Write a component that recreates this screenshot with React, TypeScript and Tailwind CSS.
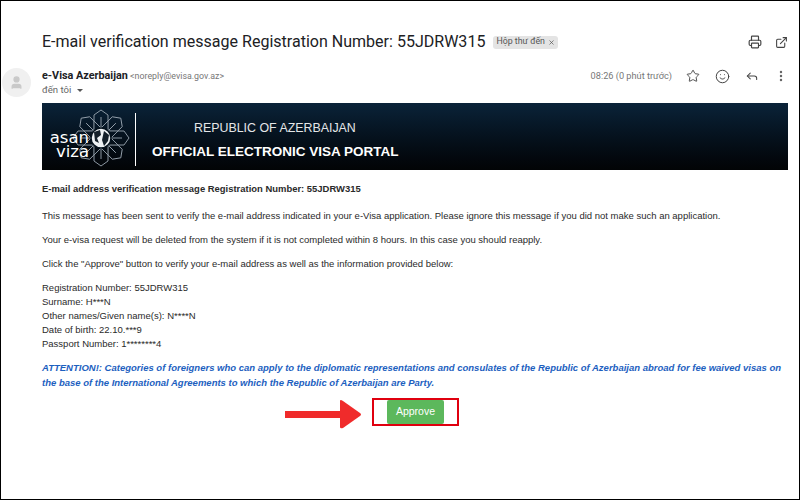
import React from 'react';
import { Printer, ExternalLink, Star, Smile, Reply, MoreVertical, User, X } from 'lucide-react';

const details = [
  'Registration Number: 55JDRW315',
  'Surname: H***N',
  'Other names/Given name(s): N****N',
  'Date of birth: 22.10.***9',
  'Passport Number: 1********4',
];

const petals = [0, 45, 90, 135, 180, 225, 270, 315];

const Logo = () => (
  <div className="relative h-[67px] w-[93px] shrink-0">
    <svg viewBox="0 0 93 67" className="absolute inset-0 h-full w-full" fill="none" stroke="#9aa6b1" strokeWidth="0.9">
      {petals.map((deg) => (
        <path key={deg} d="M59 25 L52 18 L52 12 L59 7 L66 12 L66 18 Z M59 25 L59 14" transform={`rotate(${deg} 59 35)`} />
      ))}
      <circle cx="59" cy="35" r="10" fill="#eef2f4" stroke="#05121d" strokeWidth="1.5" />
      <path d="M52 29 L58 27 L59 32 L55 35 L57 40 L53 38 Z M62 28 L67 32 L66 38 L62 43 L60 37 Z" fill="#14202a" stroke="none" />
    </svg>
    <div className="absolute left-[4px] top-[28px] w-[43px] text-right font-['DejaVu_Sans',sans-serif] text-[16.5px] leading-[14px] text-white">
      asan
      <br />
      viza
    </div>
  </div>
);

const App = () => {
  return (
    <div className="h-[500px] w-[800px] overflow-hidden border border-black bg-white font-['Liberation_Sans',Arial,sans-serif]">
      <div className="flex items-center pl-[41px] pr-[11px] pt-[29px]">
        <h1 className="font-['Roboto',sans-serif] text-[16.05px] leading-6 text-[#202124]">
          E-mail verification message Registration Number: 55JDRW315
        </h1>
        <span className="ml-2 flex h-[13px] items-center gap-[3px] rounded-[3px] bg-[#e4e4e4] px-[3px] font-['Roboto',sans-serif] text-[8.8px] text-[#555]">
          Hộp thư đến
          <X className="h-[7px] w-[7px]" strokeWidth={2.4} />
        </span>
        <div className="ml-auto flex items-center gap-[13px] text-[#444]">
          <Printer className="h-[14px] w-[14px]" strokeWidth={2} />
          <ExternalLink className="h-[13px] w-[13px]" strokeWidth={2} />
        </div>
      </div>

      <div className="mt-[15px] flex pl-[1px] pr-[11px]">
        <div className="-mt-[1px] flex h-[29px] w-[29px] items-center justify-center rounded-full bg-[#f0f0f0]">
          <User className="h-[15px] w-[15px] fill-[#c9c9c9] text-[#c9c9c9]" />
        </div>
        <div className="ml-[11px] font-['Roboto',sans-serif]">
          <div className="text-[8.85px] leading-[14px] text-[#777]">
            <span className="text-[10.8px] font-bold text-[#202124]">e-Visa Azerbaijan</span> &lt;noreply@evisa.gov.az&gt;
          </div>
          <div className="flex items-center gap-[6px] text-[9.6px] leading-[14px] text-[#666]">
            đến tôi
            <span className="h-0 w-0 border-x-[3px] border-t-[3px] border-x-transparent border-t-[#555]" />
          </div>
        </div>
        <div className="ml-auto flex h-[14px] items-center text-[#444]">
          <span className="mr-[14px] font-['Roboto',sans-serif] text-[9.2px] text-[#777]">08:26 (0 phút trước)</span>
          <Star className="h-[14px] w-[14px]" strokeWidth={1.6} />
          <Smile className="ml-[15px] h-[15px] w-[15px]" strokeWidth={1.6} />
          <Reply className="ml-[15px] h-[14px] w-[14px]" strokeWidth={1.8} />
          <MoreVertical className="ml-[15px] h-[14px] w-[14px] text-[#666]" strokeWidth={2.2} />
        </div>
      </div>

      <div className="ml-[41px] mr-[11px] mt-[6px]">
        <div className="flex h-[67px] items-stretch bg-gradient-to-b from-[#0a2339] to-[#020406]">
          <Logo />
          <div className="mt-[10px] h-[53px] w-px bg-white" />
          <div className="ml-[16px] pt-[17px] text-white">
            <div className="ml-[42px] text-[12.4px] leading-[16px] text-[#e4e6e8]">REPUBLIC OF AZERBAIJAN</div>
            <div className="mt-[7px] text-[13.5px] font-bold leading-[18px]">OFFICIAL ELECTRONIC VISA PORTAL</div>
          </div>
        </div>

        <div className="text-[9.5px] leading-[14px] text-[#2a2a2a]">
          <p className="mt-[12px] text-[9.45px] font-bold">E-mail address verification message Registration Number: 55JDRW315</p>
          <p className="mt-[13px]">
            This message has been sent to verify the e-mail address indicated in your e-Visa application. Please ignore this message if you did not make such an application.
          </p>
          <p className="mt-[10px]">
            Your e-visa request will be deleted from the system if it is not completed within 8 hours. In this case you should reapply.
          </p>
          <p className="mt-[10px]">
            Click the "Approve" button to verify your e-mail address as well as the information provided below:
          </p>
          <div className="mt-[10px]">
            {details.map((line) => (
              <div key={line}>{line}</div>
            ))}
          </div>
          <p className="mt-[9px] text-[9.5px] font-bold italic leading-[15px] text-[#1d5fbf]">
            ATTENTION!: Categories of foreigners who can apply to the diplomatic representations and consulates of the Republic of Azerbaijan abroad for fee waived visas on the base of the International Agreements to which the Republic of Azerbaijan are Party.
          </p>
        </div>

        <div className="mt-[8px] flex items-start pl-[243px]">
          <svg width="77" height="30" viewBox="0 0 77 30" className="mr-[10px] mt-[1px]">
            <rect x="0" y="12" width="58" height="7" fill="#f02b2b" />
            <path d="M55 2 Q55 0 58 2 L75 14 Q77 15.5 75 17 L58 29 Q55 30 55 28 Z" fill="#f02b2b" />
          </svg>
          <div className="flex h-[28px] w-[87px] items-center justify-center border-2 border-[#e0000f]">
            <button className="flex h-[24px] w-[57px] items-center justify-center rounded-[2px] bg-[#5cb85c] text-[10.5px] text-white">
              Approve
            </button>
          </div>
        </div>
      </div>
    </div>
  );
};

export default App;
